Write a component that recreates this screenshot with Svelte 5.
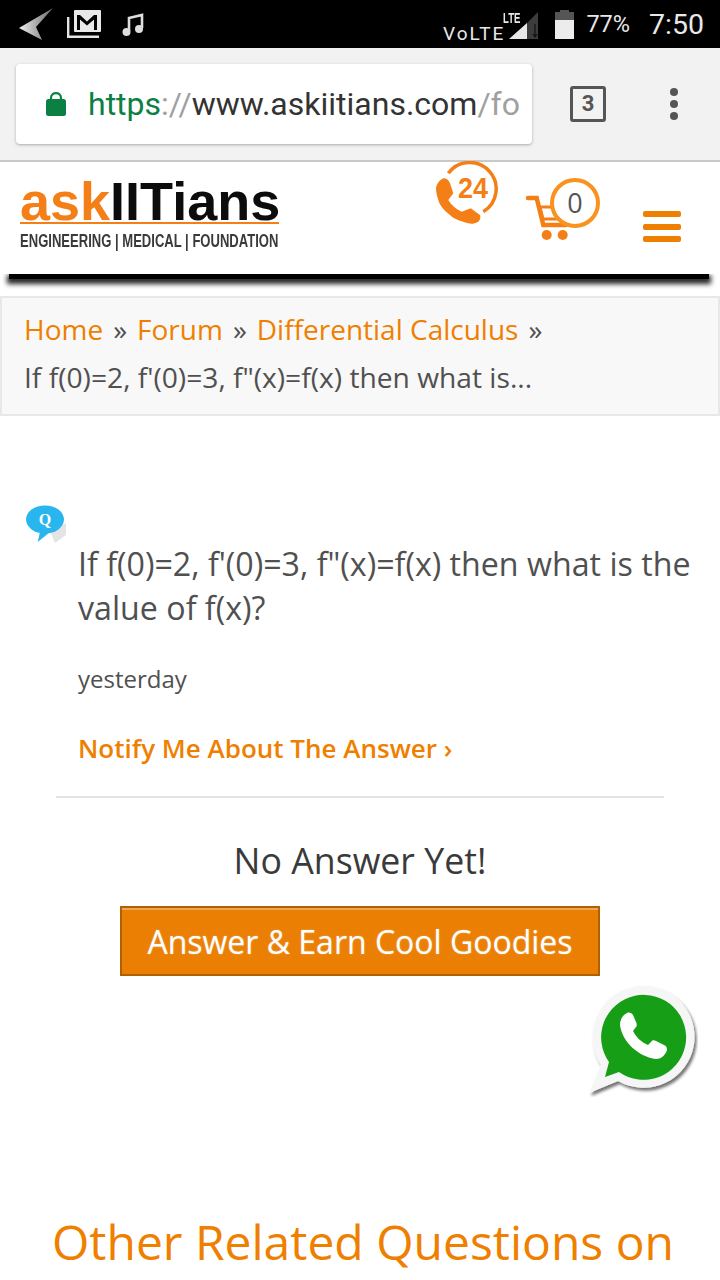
<script>
  const crumbs = ["Home", "Forum", "Differential Calculus"];
</script>

<div class="page">
  <div class="statusbar">
    <div class="status-left">
      <svg class="nav-arrow" width="34" height="32" viewBox="0 0 34 32">
        <defs>
          <linearGradient id="arrowfill" x1="0" y1="0" x2="1" y2="0">
            <stop offset="0" stop-color="#f0f0f0" />
            <stop offset="1" stop-color="#666" />
          </linearGradient>
        </defs>
        <path d="M0 20 L34 0 L17 19 L23 32 Z" fill="url(#arrowfill)" />
      </svg>
      <svg class="mail" width="34" height="28" viewBox="0 0 34 28">
        <path d="M1.200 7 V26.800 H32" fill="none" stroke="#e4e4e4" stroke-width="2.400" />
        <rect x="7" y="0" width="27" height="22" rx="1" fill="#e8e8e8" />
        <path d="M10 20 V5 H13 L20 11.500 L27 5 H30 V20 H27 V9.500 L20 15.500 L13 9.500 V20 Z" fill="#000" />
      </svg>
      <svg class="note" width="22" height="24" viewBox="0 0 22 24">
        <path d="M7 18 V5 L20 2 V15" fill="none" stroke="#ddd" stroke-width="2.600" />
        <circle cx="4.500" cy="19" r="4" fill="#ddd" />
        <circle cx="17" cy="16" r="4" fill="#ddd" />
      </svg>
    </div>
    <div class="status-right">
      <div class="volte">
        <span class="volte-text">VoLTE</span>
        <span class="lte-text">LTE</span>
        <svg width="30" height="30" viewBox="0 0 30 30">
          <path d="M0 29 L18 13 V29 Z" fill="#e8e8e8" />
          <path d="M18 13 L29 2 V29 H18 Z" fill="#3c3c3c" />
          <path d="M26 14 V27 M24 24 L26 27 L28 24" stroke="#111" stroke-width="1.200" fill="none" />
        </svg>
      </div>
      <svg class="battery" width="19" height="29" viewBox="0 0 19 29">
        <path d="M5 2 V0 H14 V2 H19 V10 H0 V2 Z" fill="#555" />
        <rect x="0" y="10" width="19" height="19" fill="#ececec" />
      </svg>
      <span class="pct">77%</span>
      <span class="clock">7:50</span>
    </div>
  </div>

  <div class="toolbar">
    <div class="urlbox">
      <svg class="lock" width="20" height="28" viewBox="0 0 20 28">
        <path d="M5 11 V8 C5 1.500 15 1.500 15 8 V11" fill="none" stroke="#0b8043" stroke-width="2.200" />
        <rect x="0" y="9" width="20" height="17" rx="2.500" fill="#0b8043" />
      </svg>
      <div class="url"><span class="https">https</span><span class="slashes">://</span><span class="host">www.askiitians.com</span><span class="rest">/fo</span></div>
    </div>
    <div class="tabcount">3</div>
    <div class="kebab"><i></i><i></i><i></i></div>
  </div>

  <header class="site">
    <div class="logo">
      <div class="wordmark"><span class="ask">ask</span><span class="iit">IITians</span></div>
      <div class="tagline">ENGINEERING | MEDICAL | FOUNDATION</div>
    </div>
    <div class="actions">
      <svg class="phone24" width="66" height="66" viewBox="0 0 66 66">
        <path d="M12.300 12.300 A26.500 26.500 0 1 1 47.300 50.700" fill="none" stroke="#f47f16" stroke-width="3.500" />
        <path d="M0 27 C1 22 4 19 7.300 17.300 C10 16.500 13 19 14 22.300 L17.300 32.300 L12.300 39 C15 44 20 48 25.700 50.700 L34.700 47.300 L44 54 C45 57 44 59 42.300 60.700 C38 63 35 63 32.300 62.300 C24 60 18 58 14 54 C8 49 4 45 2.300 39 C1 35 0 31 0 27 Z" fill="#f47f16" />
        <text x="22" y="37" class="t24" textLength="30" lengthAdjust="spacingAndGlyphs">24</text>
      </svg>
      <div class="cart">
        <svg width="46" height="48" viewBox="0 0 46 48">
          <path d="M3 5 H11.700 L18.300 32 H41" fill="none" stroke="#f47f16" stroke-width="4.500" stroke-linecap="round" />
          <path d="M15 14 H40 V26 H18 Z" fill="none" stroke="#f47f16" stroke-width="3" />
          <circle cx="21.700" cy="42" r="5" fill="#f47f16" />
          <circle cx="37.700" cy="42" r="5" fill="#f47f16" />
        </svg>
        <span class="cart-count">0</span>
      </div>
      <div class="burger"><i></i><i></i><i></i></div>
    </div>
  </header>
  <div class="header-shadow"></div>

  <nav class="crumbs">
    <div class="trail">
      {#each crumbs as c}
        <a href="#top">{c}</a><span class="sep">»</span>
      {/each}
    </div>
    <div>If f(0)=2, f'(0)=3, f"(x)=f(x) then what is...</div>
  </nav>

  <main class="question">
    <svg class="qicon" width="42" height="38" viewBox="0 0 42 38">
      <path d="M24 26 L40 18 V30 L29 38 Z" fill="#e4e4e4" />
      <ellipse cx="19" cy="14.500" rx="19" ry="14" fill="#29b6ee" />
      <path d="M14 27 L11.700 37 L24 27 Z" fill="#29b6ee" />
      <text x="19" y="20" class="qletter">Q</text>
    </svg>
    <h1>If f(0)=2, f'(0)=3, f"(x)=f(x) then what is the value of f(x)?</h1>
    <p class="when">yesterday</p>
    <a class="notify" href="#top">Notify Me About The Answer ›</a>
  </main>

  <div class="rule"></div>

  <section class="noanswer">
    <h2>No Answer Yet!</h2>
    <button class="answer">Answer &amp; Earn Cool Goodies</button>
  </section>

  <section class="related">
    <h2>Other Related Questions on</h2>
  </section>

  <svg class="whatsapp" width="112" height="112" viewBox="0 0 112 112">
    <defs>
      <filter id="wa-shadow" x="-10%" y="-10%" width="125%" height="125%">
        <feDropShadow dx="2" dy="3" stdDeviation="1.500" flood-color="#000" flood-opacity="0.55" />
      </filter>
    </defs>
    <path d="M3 108 L15 80 A51 51 0 1 1 32 96 Z" fill="#f6f6f6" filter="url(#wa-shadow)" />
    <path d="M19 92 L23 77 A42.500 42.500 0 1 1 33 87 Z" fill="#169f16" />
    <path transform="translate(5 -1)" d="M36 29 C32 31 29 35 29 41 C31 58 48 73 65 75 C71 75 75 70 76 66 C76 63 75 62 73 61 L65 57 C63 56 61 56 60 58 L57 61 C50 58 45 53 42 47 L45 43 C46 42 46 40 45 38 L42 31 C41 29 38 28 36 29 Z" fill="#fff" />
  </svg>
</div>

<style>
  :global(body) {
    margin: 0;
    background: #fff;
  }
  .page {
    position: relative;
    width: 720px;
    height: 1280px;
    overflow: hidden;
    font-family: "Open Sans", sans-serif;
    color: #505050;
  }
  .statusbar {
    height: 48px;
    background: #000;
    display: flex;
    justify-content: space-between;
    align-items: center;
    padding: 0 16px 0 19px;
    font-family: Roboto, sans-serif;
    color: #e8e8e8;
  }
  .status-left {
    display: flex;
    align-items: center;
  }
  .mail {
    margin-left: 14px;
  }
  .note {
    margin-left: 21px;
    margin-top: 2px;
  }
  .status-right {
    display: flex;
    align-items: center;
  }
  .volte {
    position: relative;
    display: flex;
    align-items: flex-end;
    height: 30px;
    margin-top: 2px;
  }
  .volte-text {
    font-size: 19px;
    letter-spacing: 2px;
    line-height: 12px;
    margin-right: 4px;
  }
  .lte-text {
    position: absolute;
    left: 60px;
    top: 1px;
    font-family: "Liberation Sans", sans-serif;
    font-size: 15px;
    line-height: 13px;
    font-weight: 700;
    transform: scaleX(0.64);
    transform-origin: left;
  }
  .battery {
    margin-left: 16px;
  }
  .pct {
    font-size: 23.500px;
    margin-left: 12px;
  }
  .clock {
    font-size: 28.500px;
    margin-left: 19px;
  }
  .toolbar {
    height: 114px;
    background: #f2f2f2;
    border-bottom: 2px solid #c9c9c9;
    box-sizing: border-box;
    display: flex;
    align-items: center;
    padding: 0 0 0 16px;
  }
  .urlbox {
    width: 516px;
    height: 80px;
    box-sizing: border-box;
    background: #fff;
    border-radius: 4px;
    box-shadow: 0 1px 3px rgba(0, 0, 0, 0.3);
    display: flex;
    align-items: center;
    padding: 0 8px 0 30px;
  }
  .lock {
    flex: none;
  }
  .url {
    margin-left: 22px;
    font-family: Roboto, sans-serif;
    font-size: 32px;
    white-space: nowrap;
  }
  .https {
    color: #0b8043;
  }
  .slashes,
  .rest {
    color: #a0a0a0;
  }
  .host {
    color: #333;
  }
  .tabcount {
    width: 36px;
    height: 36px;
    box-sizing: border-box;
    margin-left: 38px;
    border: 3.500px solid #555;
    border-radius: 3px;
    color: #555;
    font-family: Roboto, sans-serif;
    font-size: 22px;
    font-weight: 700;
    text-align: center;
    line-height: 29px;
  }
  .kebab {
    margin-left: 64px;
    display: flex;
    flex-direction: column;
    gap: 4px;
  }
  .kebab i {
    width: 8px;
    height: 8px;
    border-radius: 50%;
    background: #555;
  }
  .site {
    position: relative;
    z-index: 1;
    background: #fff;
    height: 112px;
    display: flex;
    justify-content: space-between;
    box-sizing: border-box;
    padding: 0 39px 0 20px;
  }
  .wordmark {
    font-family: "Liberation Sans", sans-serif;
    font-weight: 700;
    font-size: 54px;
    line-height: 58px;
    height: 50px;
    margin-top: 10px;
    border-bottom: 2px solid #f47f16;
    width: 259px;
    white-space: nowrap;
  }
  .ask {
    color: #f47f16;
  }
  .iit {
    color: #0c0c0c;
  }
  .tagline {
    font-family: "Liberation Sans", sans-serif;
    font-size: 18px;
    line-height: 18px;
    font-weight: 700;
    color: #3a3a3a;
    margin-top: 8px;
    white-space: nowrap;
    transform: scaleX(0.725);
    transform-origin: left;
  }
  .actions {
    display: flex;
    align-items: flex-start;
  }
  .phone24 {
    margin-top: -1px;
  }
  .t24 {
    font-family: "Liberation Sans", sans-serif;
    font-weight: 700;
    font-size: 29px;
    fill: #f47f16;
  }
  .qletter {
    font-family: "Liberation Serif", serif;
    font-weight: 700;
    font-size: 16px;
    fill: #fff;
    text-anchor: middle;
  }
  .cart {
    position: relative;
    margin-left: 23px;
    margin-top: 31px;
    width: 46px;
    height: 48px;
  }
  .cart-count {
    position: absolute;
    left: 25px;
    top: -15px;
    width: 50px;
    height: 50px;
    box-sizing: border-box;
    border: 4px solid #f7931e;
    border-radius: 50%;
    background: #fff;
    text-align: center;
    font-size: 27px;
    line-height: 41px;
    color: #555;
  }
  .burger {
    margin-left: 72px;
    margin-top: 49px;
    display: flex;
    flex-direction: column;
    gap: 6.500px;
  }
  .burger i {
    width: 38px;
    height: 6px;
    border-radius: 2px;
    background: #ef7f00;
  }
  .header-shadow {
    height: 5px;
    width: 700px;
    margin-left: 9px;
    background: #000;
    box-shadow: 0 3px 5px 2px rgba(0, 0, 0, 0.85);
    margin-bottom: 17px;
  }
  .crumbs {
    height: 120px;
    box-sizing: border-box;
    background: #f8f8f8;
    border: 2px solid #e8e8e8;
    padding: 7px 22px;
    font-size: 28.200px;
    line-height: 48px;
    white-space: nowrap;
  }
  .trail {
    font-size: 28px;
  }
  .crumbs a {
    color: #ef7f00;
    text-decoration: none;
  }
  .sep {
    margin: 0 10px;
  }
  .question {
    position: relative;
    padding: 126px 20px 0 78px;
  }
  .qicon {
    position: absolute;
    left: 26px;
    top: 89px;
  }
  h1 {
    margin: 0;
    font-size: 32.200px;
    line-height: 44px;
    font-weight: 400;
  }
  .when {
    margin: 31px 0 0;
    font-size: 24px;
    line-height: 36px;
  }
  .notify {
    display: block;
    margin-top: 33px;
    font-size: 26px;
    line-height: 36px;
    font-weight: 600;
    color: #ef7f00;
    text-decoration: none;
  }
  .rule {
    height: 2px;
    background: #e4e4e4;
    margin: 30px 56px 0;
  }
  .noanswer {
    text-align: center;
  }
  .noanswer h2 {
    margin: 37px 0 0;
    font-size: 35.700px;
    line-height: 50px;
    font-weight: 400;
    color: #3a3a3a;
  }
  .answer {
    display: block;
    margin: 21px auto 0;
    width: 480px;
    height: 70px;
    box-sizing: border-box;
    background: #ea7f04;
    border: 2px solid #b06000;
    box-shadow: inset 0 2px 0 rgba(255, 255, 255, 0.3);
    color: #fff;
    font-family: "Open Sans", sans-serif;
    font-size: 32px;
    text-shadow: 0 0 2px rgba(255, 255, 255, 0.4);
    padding: 0;
  }
  .related {
    text-align: center;
    padding-left: 6px;
  }
  .related h2 {
    margin: 234px 0 0;
    font-size: 48px;
    line-height: 64px;
    font-weight: 400;
    color: #ef7f00;
    white-space: nowrap;
  }
  .whatsapp {
    position: absolute;
    left: 586px;
    top: 985px;
  }
</style>
